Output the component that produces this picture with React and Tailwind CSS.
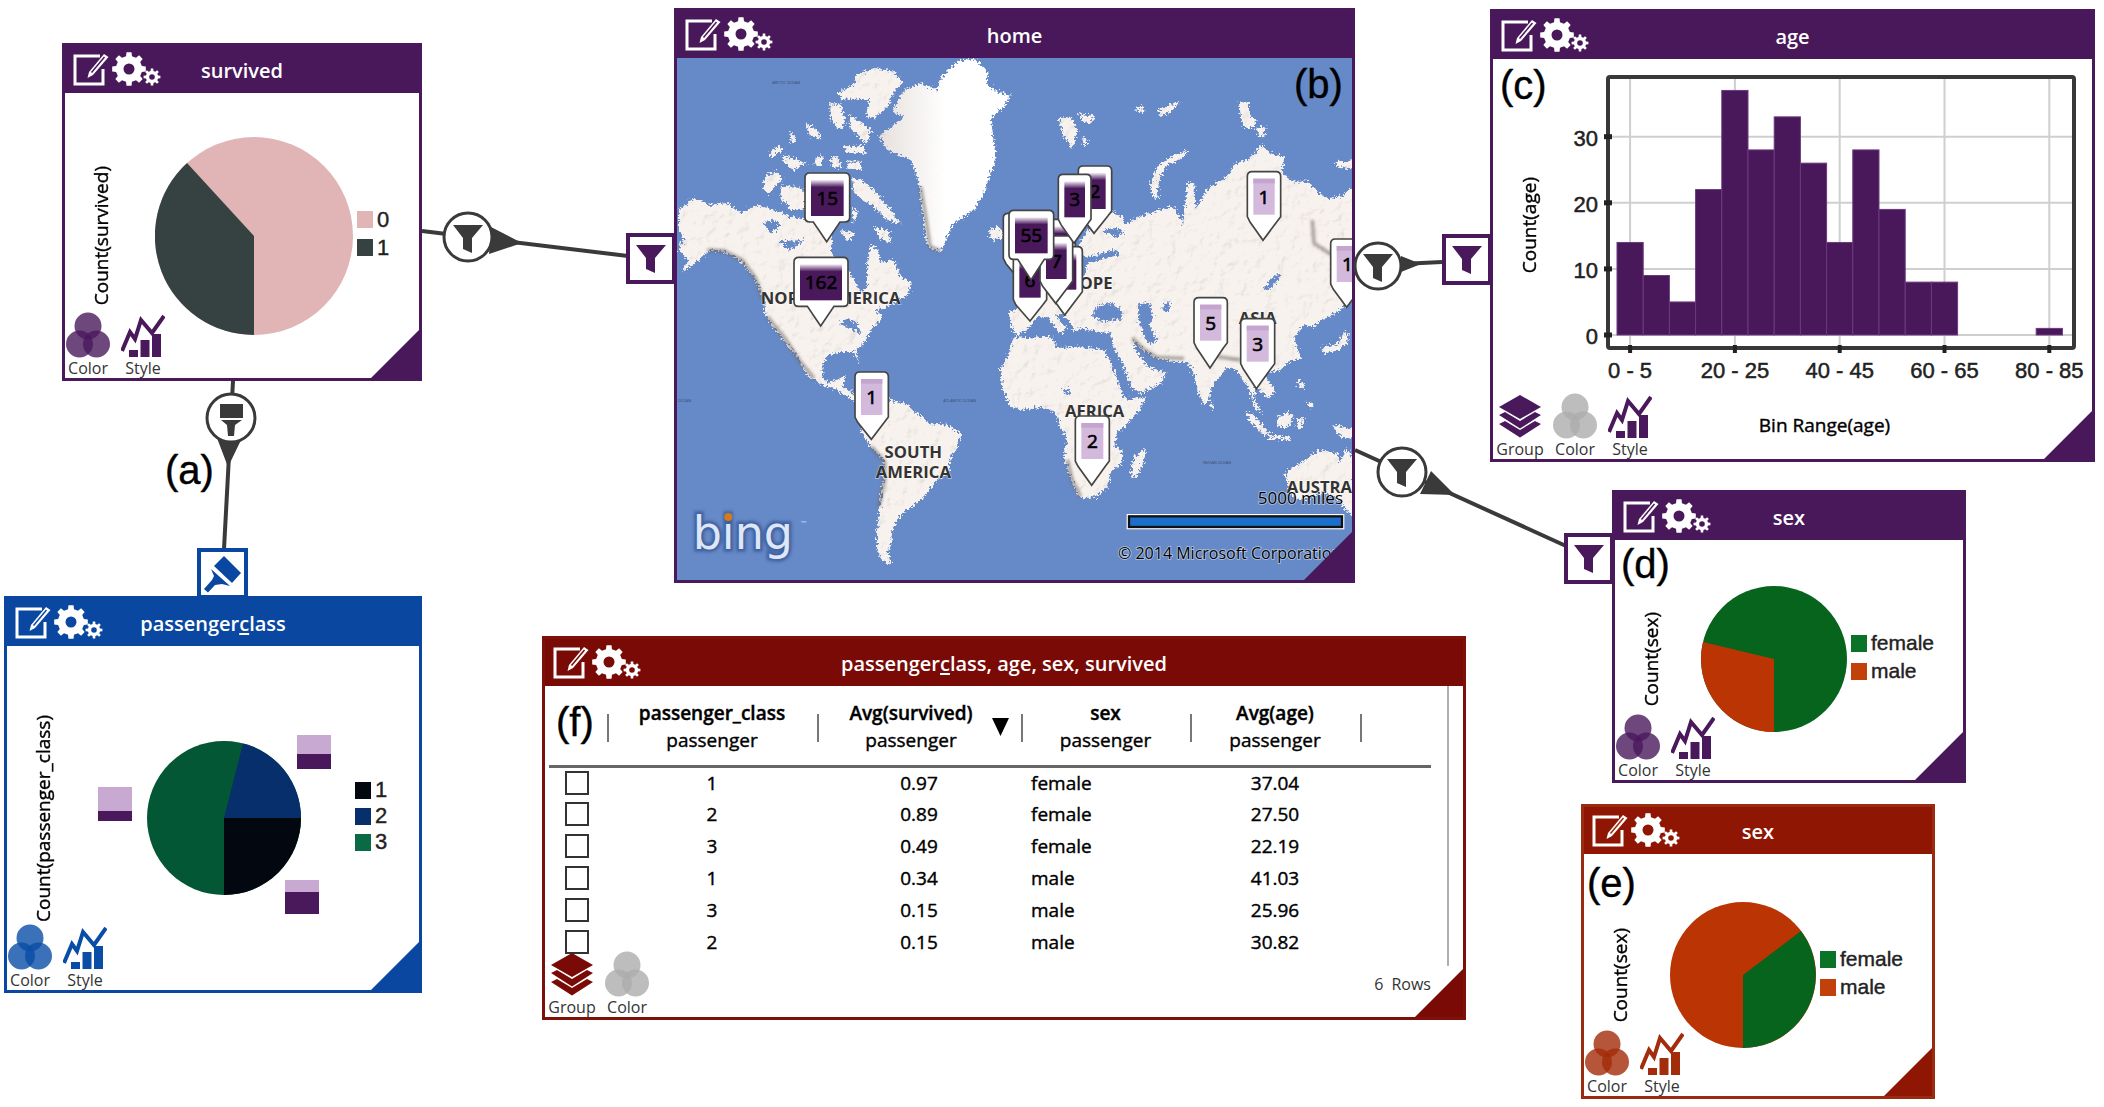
import React from "react";

const THEMES = {
  purple: { border: "border-[#4a195c]", bg: "bg-[#48185a]", text: "text-[#4a195c]" },
  blue: { border: "border-[#0a47a0]", bg: "bg-[#0a47a0]", text: "text-[#0a4da6]" },
  red: { border: "border-[#7e100a]", bg: "bg-[#7a0a06]", text: "text-[#7a0a06]" },
  rust: { border: "border-[#9a2a10]", bg: "bg-[#901604]", text: "text-[#a32c0a]" },
};

function gearPath(cx, cy, outer, root, hole) {
  const teeth = 8;
  const step = (Math.PI * 2) / teeth;
  const at = (r, a) => `${(cx + r * Math.sin(a)).toFixed(2)} ${(cy - r * Math.cos(a)).toFixed(2)}`;
  let d = "";
  for (let i = 0; i < teeth; i++) {
    const a = i * step;
    d += `${i ? "L" : "M"}${at(root, a - step * 0.29)}L${at(outer, a - step * 0.19)}L${at(outer, a + step * 0.19)}L${at(root, a + step * 0.29)}`;
  }
  return `${d}ZM${cx - hole} ${cy}a${hole} ${hole} 0 1 0 ${hole * 2} 0a${hole} ${hole} 0 1 0 ${-hole * 2} 0Z`;
}

const EditIcon = () => (
  <svg width="37" height="35" viewBox="0 0 37 35" fill="none" aria-hidden="true">
    <path d="M27 4H2V32H30V17" stroke="white" strokeWidth="3" />
    <path d="M16 20L31 2L35.500 5L20 23L14.500 26Z" fill="white" />
    <path d="M18.500 20.500L31.500 5" stroke="currentColor" strokeWidth="1.500" />
  </svg>
);

const GearsIcon = () => (
  <svg width="50" height="36" viewBox="0 0 50 36" fill="white" fillRule="evenodd" aria-hidden="true">
    <path d={gearPath(18, 17, 17, 13.2, 5.5)} />
    <path d={gearPath(41, 25, 8.5, 6.2, 2.8)} />
  </svg>
);

const ColorIcon = () => (
  <svg width="44" height="46" viewBox="0 0 44 46" fill="currentColor" fillOpacity="0.8" aria-hidden="true">
    <circle cx="22" cy="14" r="13.500" />
    <circle cx="13.500" cy="32" r="13.500" />
    <circle cx="30.500" cy="32" r="13.500" />
  </svg>
);

const StyleIcon = () => (
  <svg width="44" height="46" viewBox="0 -3 44 46" aria-hidden="true">
    <path d="M1 36L9 17L14 24L20 5L31 18L43 1" fill="none" stroke="currentColor" strokeWidth="4" />
    <path d="M8 35h9v7H8zM19.500 25h9v17h-9zM31 19h9v23h-9z" fill="currentColor" />
  </svg>
);

const GroupIcon = () => (
  <svg width="42" height="46" viewBox="0 -2 42 46" fill="currentColor" aria-hidden="true">
    <path d="M21 0L42 12L21 24L0 12Z" />
    <path d="M0 20L6 17L21 26L36 17L42 20L21 33.500Z" />
    <path d="M0 29L6 26L21 35L36 26L42 29L21 42.500Z" />
  </svg>
);

const FUNNEL = "M0 0H30L19 13V28L10 24V13Z";

const TOOL_ICONS = { Group: GroupIcon, Color: ColorIcon, Style: StyleIcon };

function Tools({ items, theme, muted, inset }) {
  return (
    <div className={`absolute bottom-0 left-0 flex gap-[9px] ${inset ? "pl-1" : ""}`}>
      {items.map((name) => {
        const Icon = TOOL_ICONS[name];
        return (
          <button key={name} type="button" className="flex w-[46px] flex-col items-center">
            <span className={name === muted ? "text-[#adadad]" : THEMES[theme].text}>
              <Icon />
            </span>
            <span className="text-base leading-5 text-[#333]">{name}</span>
          </button>
        );
      })}
    </div>
  );
}

function Window({ title, theme, place, children, tools, muted, inset }) {
  const t = THEMES[theme];
  return (
    <section className={`absolute border-[3px] bg-white ${t.border} ${place}`}>
      <header className={`grid h-[47px] grid-cols-[1fr_auto_1fr] items-center ${t.bg}`}>
        <div className={`flex items-center gap-px pl-2 ${t.text}`}>
          <button type="button" aria-label="Edit">
            <EditIcon />
          </button>
          <button type="button" aria-label="Settings">
            <GearsIcon />
          </button>
        </div>
        <h2 className="pt-0.5 text-[20px] leading-7 font-semibold text-white">{title}</h2>
        <span />
      </header>
      {children}
      {tools && <Tools items={tools} theme={theme} muted={muted} inset={inset} />}
      <div className={`absolute right-0 bottom-0 size-12 [clip-path:polygon(100%_0,100%_100%,0_100%)] ${t.bg}`} />
    </section>
  );
}

const AxisLabel = ({ children }) => (
  <span className="w-6 rotate-180 text-center text-[19px] leading-6 whitespace-nowrap text-black [-webkit-text-stroke:0.4px] [writing-mode:vertical-rl]">
    {children}
  </span>
);

function Legend({ items, size }) {
  return (
    <ul className={`pb-1 font-[Liberation_Sans,Arial,sans-serif] text-[#222] [-webkit-text-stroke:0.4px] ${size}`}>
      {items.map(([label, swatch]) => (
        <li key={label} className="flex items-center gap-1">
          <span className={`h-[17px] w-4 ${swatch}`} />
          {label}
        </li>
      ))}
    </ul>
  );
}

const UnderC = () => (
  <>
    passenger<span className="underline decoration-2 underline-offset-2">c</span>lass
  </>
);

const LAND = [
  "M15 480L60 445L110 465L160 460L200 490L250 465L300 480L345 500L400 510L440 520L475 560L470 610L510 650L540 690L560 725L580 715L580 640L590 585L612 600L620 640L660 630L680 680L715 700L700 735L640 770L600 780L625 800L590 840L570 880L545 900L556 938L540 905L500 905L460 915L445 945L445 980L460 1000L490 990L515 975L505 1010L530 1025L550 1045L560 1065L520 1038L480 1015L450 1008L400 975L370 920L330 870L290 820L275 790L270 745L240 680L200 630L150 605L110 600L70 630L20 670L45 630L15 600L30 560L15 540Z",
  "M550 75L600 55L660 65L685 100L660 125L640 170L600 205L575 200L590 150L540 145L505 150L490 130L540 105Z",
  "M470 160L500 165L515 220L495 240L470 205Z",
  "M525 195L550 210L590 240L580 280L560 265L530 235Z",
  "M510 290L570 285L575 310L520 308ZM395 220L430 240L440 268L405 255ZM350 245L368 270L350 282Z",
  "M285 310L315 285L325 300L290 322ZM325 315L395 340L360 360L335 342ZM425 325L445 318L440 348L422 342Z",
  "M470 325L492 320L502 355L475 350ZM520 335L560 335L562 362L520 354Z",
  "M275 375L310 365L325 385L300 410L285 435L268 415Z",
  "M320 410L370 410L395 430L390 480L350 480L320 440Z",
  "M535 385L560 390L600 420L640 470L680 520L640 510L600 470L540 430Z",
  "M535 470L552 490L538 518ZM600 530L640 540L655 580L620 565ZM500 540L545 550L520 572Z",
  "M945 540L975 530L992 560L955 572Z",
  "M1155 205L1190 200L1210 240L1195 295L1170 260ZM1215 190L1265 200L1250 220L1225 215ZM1225 260L1245 275L1230 285Z",
  "M1383 180L1402 165L1412 187ZM1450 182L1490 165L1520 155L1490 185L1460 197Z",
  "M1695 155L1725 155L1725 190L1745 215L1735 235L1710 230L1700 190ZM1745 235L1775 230L1770 260L1750 255Z",
  "M1435 440L1430 400L1450 350L1490 320L1540 300L1530 320L1480 345L1460 375L1450 420L1455 445Z",
  "M1985 332L2040 335L2040 355L1990 350Z",
  "M1190 620L1230 560L1270 500L1300 480L1345 500L1350 525L1400 500L1460 480L1500 470L1528 525L1540 400L1560 400L1565 480L1600 420L1625 400L1660 380L1680 345L1730 325L1760 285L1790 310L1830 320L1825 370L1860 395L1900 395L1935 430L1960 445L2000 440L2040 410V745L1990 785L1940 812L1920 830L1890 825L1860 860L1880 925L1865 930L1850 930L1820 960L1790 965L1770 975L1803 1020L1785 1045L1760 1025L1745 1000L1740 1050L1765 1090L1745 1075L1725 1020L1700 980L1690 960L1660 950L1640 975L1610 1010L1605 1050L1590 1065L1570 1020L1560 970L1540 935L1500 935L1450 925L1410 900L1375 865L1385 900L1420 950L1475 970L1460 1000L1400 1030L1375 1015L1350 950L1320 890L1310 850L1275 845L1225 835L1200 845L1190 815L1160 790L1145 800L1180 835L1160 850L1120 800L1090 800L1060 840L1025 855L1012 830L1005 790L1040 770L1030 740L1080 700L1150 680L1180 650Z",
  "M1020 860L1050 865L1130 860L1150 895L1215 890L1240 895L1290 900L1310 940L1330 990L1345 1035L1360 1050L1415 1040L1400 1075L1370 1110L1330 1150L1320 1190L1345 1200L1342 1240L1310 1265L1300 1310L1265 1340L1225 1345L1210 1335L1190 1280L1170 1220L1180 1170L1160 1130L1150 1100L1145 1085L1100 1070L1040 1080L1010 1070L985 1020L980 960L1000 925Z",
  "M1380 1220L1415 1195L1410 1230L1390 1282L1370 1275Z",
  "M1612 1055L1624 1070L1612 1078Z",
  "M1715 1085L1740 1095L1785 1152L1770 1158L1730 1115ZM1785 1153L1850 1162L1850 1172L1785 1164Z",
  "M1810 1105L1840 1085L1858 1100L1845 1130L1815 1130ZM1870 1105L1890 1105L1880 1140L1868 1130Z",
  "M1872 990L1888 1000L1890 1020L1875 1010ZM1895 1055L1918 1060L1912 1078Z",
  "M1975 1125L2040 1140V1168L2000 1160Z",
  "M1945 893L1990 883L2010 845L2024 850L2018 880L1990 902L1950 908Z",
  "M1835 1270L1860 1250L1900 1225L1935 1200L1990 1210L2000 1240L2018 1195L2040 1230V1400L2010 1375L1990 1340L1940 1330L1880 1350L1845 1330Z",
  "M545 1050L600 1040L650 1050L700 1065L720 1085L750 1105L760 1120L820 1125L860 1150L850 1190L830 1220L825 1265L790 1290L750 1340L720 1365L690 1385L670 1410L655 1440L650 1480L640 1510L655 1545L625 1530L610 1500L610 1440L620 1350L630 1270L630 1230L590 1190L560 1140L570 1090Z",
];
const GREENLAND =
  "M690 120L740 100L790 120L800 85L850 35L900 25L945 70L935 100L970 125L1010 135L990 170L950 205L960 280L965 330L945 380L930 430L900 480L840 520L820 560L800 605L770 595L755 570L745 480L735 400L710 330L640 300L615 255L655 230L690 200L655 185Z";
const RIDGES =
  "M100 600L150 603L205 630L245 685L268 750M280 800L335 868L375 930L420 985M592 1190L632 1235L632 1290L615 1370M1375 865L1410 898L1450 922L1530 925M1630 920L1700 930M1180 1230L1195 1290L1220 1340M1915 510L1920 580L1970 612L2034 615M740 410L755 500L768 590L800 603";
const WATER = [
  "M270 520L300 512L318 525L295 548ZM320 575L385 572L345 600Z",
  "M1255 800L1270 768L1310 760L1345 785L1340 808L1290 812Z",
  "M1392 765L1425 760L1435 800L1425 830L1448 870L1425 882L1400 830Z",
  "M1215 610L1235 625L1320 600L1335 612L1240 640L1225 690L1205 680ZM1290 540L1330 535L1350 550L1320 560Z",
  "M1770 718L1790 690L1812 672L1815 690L1785 715ZM1165 1018L1190 1020L1180 1035Z",
  "M1470 765L1490 760L1485 785L1470 780ZM500 820L525 805L545 820L560 850L535 835Z",
];

const PINS = [
  { x: 988, y: 490, w: 100, tip: [1045, 700], dark: true },
  { x: 1018, y: 614, w: 100, tip: [1068, 813], text: "6", dark: true },
  { x: 1108, y: 508, w: 96, tip: [1160, 720], dark: true },
  { x: 1125, y: 590, w: 100, tip: [1172, 795], dark: true },
  { x: 1098, y: 558, w: 98, tip: [1145, 760], text: "7", dark: true },
  { x: 1213, y: 348, w: 100, tip: [1260, 550], text: "2", dark: true },
  { x: 1153, y: 373, w: 98, tip: [1200, 580], text: "3", dark: true },
  { x: 1005, y: 481, w: 134, tip: [1071, 690], text: "55", dark: true, wide: true },
  { x: 393, y: 369, w: 134, tip: [458, 575], text: "15", dark: true, wide: true },
  { x: 360, y: 622, w: 162, tip: [440, 828], text: "162", dark: true, wide: true },
  { x: 543, y: 966, w: 100, tip: [592, 1168], text: "1" },
  { x: 1720, y: 365, w: 100, tip: [1767, 571], text: "1" },
  { x: 1560, y: 743, w: 100, tip: [1608, 954], text: "5" },
  { x: 1700, y: 806, w: 102, tip: [1747, 1016], text: "3" },
  { x: 1204, y: 1098, w: 102, tip: [1253, 1306], text: "2" },
  { x: 1970, y: 567, w: 100, tip: [2018, 772], text: "1" },
];

function Pin({ x, y, w, tip, text, dark, wide }) {
  const r = x + w;
  const b = y + 147;
  const d = wide
    ? `M${x + 14} ${y}H${r - 14}Q${r} ${y} ${r} ${y + 14}V${b - 14}Q${r} ${b} ${r - 14} ${b}H${tip[0] + 40}L${tip[0]} ${tip[1]}L${tip[0] - 40} ${b}H${x + 14}Q${x} ${b} ${x} ${b - 14}V${y + 14}Q${x} ${y} ${x + 14} ${y}Z`
    : `M${x + 14} ${y}H${r - 14}Q${r} ${y} ${r} ${y + 14}V${b - 12}L${r - 12} ${b + 4}L${tip[0]} ${tip[1]}L${x + 8} ${b + 4}L${x} ${b - 12}V${y + 14}Q${x} ${y} ${x + 14} ${y}Z`;
  return (
    <g>
      <path d={d} fill="white" stroke="#444" strokeWidth="5" />
      <rect x={x + 18} y={y + 21} width={w - 36} height="108" fill={dark ? "url(#pinDark)" : "#d3b9dc"} />
      {!dark && <rect x={x + 18} y={y + 21} width={w - 36} height="14" fill="#c5a5cf" />}
      {text && (
        <text x={x + w / 2} y={y + 96} textAnchor="middle" fontSize="57" fill="black" stroke="black" strokeWidth="2">
          {text}
        </text>
      )}
    </g>
  );
}

const WorldMap = () => (
  <svg viewBox="9 24 2025 1566" className="block h-auto w-full" fontFamily="'Open Sans', sans-serif" role="img" aria-label="World map of home">
    <defs>
      <linearGradient id="pinDark" x1="0" y1="0" x2="0" y2="1">
        <stop offset="0" stopColor="#f3eaf6" />
        <stop offset="0.2" stopColor="#4a195c" />
        <stop offset="1" stopColor="#4a195c" />
      </linearGradient>
      <linearGradient id="ice" x1="0" y1="0" x2="1" y2="0">
        <stop offset="0" stopColor="#e6e0dc" />
        <stop offset="0.5" stopColor="#ffffff" />
        <stop offset="1" stopColor="#ffffff" />
      </linearGradient>
      <filter id="coast" x="-5%" y="-5%" width="110%" height="110%">
        <feTurbulence type="fractalNoise" baseFrequency="0.14" numOctaves="3" seed="4" result="n" />
        <feDisplacementMap in="SourceGraphic" in2="n" scale="26" xChannelSelector="R" yChannelSelector="G" result="land" />
        <feTurbulence type="fractalNoise" baseFrequency="0.028" numOctaves="3" seed="9" result="hills" />
        <feDiffuseLighting in="hills" surfaceScale="4" diffuseConstant="1.140" lightingColor="#ffffff" result="lit">
          <feDistantLight azimuth="225" elevation="64" />
        </feDiffuseLighting>
        <feComposite in="lit" in2="land" operator="in" result="shade" />
        <feBlend in="shade" in2="land" mode="multiply" />
      </filter>
      <filter id="ragged" x="-5%" y="-5%" width="110%" height="110%">
        <feTurbulence type="fractalNoise" baseFrequency="0.14" numOctaves="3" seed="7" result="n" />
        <feDisplacementMap in="SourceGraphic" in2="n" scale="26" xChannelSelector="R" yChannelSelector="G" />
      </filter>
      <filter id="soft" x="-10%" y="-10%" width="120%" height="120%">
        <feGaussianBlur stdDeviation="4" />
      </filter>
    </defs>
    <rect x="0" y="0" width="2050" height="1600" fill="#6689c7" />
    <g filter="url(#coast)">
      <path d={LAND.join("")} fill="#f8f2ee" />
    </g>
    <g filter="url(#ragged)">
      <path d={GREENLAND} fill="url(#ice)" />
    </g>
    <path d={RIDGES} fill="none" stroke="#6b625c" strokeOpacity="0.6" strokeWidth="10" filter="url(#soft)" />
    <path d={WATER.join("")} fill="#6689c7" stroke="#6689c7" strokeWidth="3" filter="url(#ragged)" />

    <g fill="#3a4a6c" fontSize="12">
      <text x="295" y="103">ARCTIC OCEAN</text>
      <text x="808" y="1055">ATLANTIC OCEAN</text>
      <text x="1587" y="1243">INDIAN OCEAN</text>
      <text x="52" y="1055" textAnchor="end">PACIFIC OCEAN</text>
    </g>
    <g fill="#333" fontSize="50" fontWeight="700" stroke="white" strokeOpacity="0.5" strokeWidth="4" paintOrder="stroke">
      <text x="470" y="763" textAnchor="middle">NORTH AMERICA</text>
      <text x="1316" y="716" textAnchor="end">EUROPE</text>
      <text x="1751" y="822" textAnchor="middle">ASIA</text>
      <text x="1262" y="1102" textAnchor="middle">AFRICA</text>
      <text x="718" y="1224" textAnchor="middle">SOUTH</text>
      <text x="718" y="1283" textAnchor="middle">AMERICA</text>
      <text x="1838" y="1330">AUSTRALIA</text>
    </g>
    {PINS.map((p, i) => (
      <Pin key={i} {...p} />
    ))}

    <g fontFamily="'DejaVu Sans', sans-serif" fontSize="138">
      <text x="56" y="1498" fill="none" stroke="#2e4f8f" strokeOpacity="0.7" strokeWidth="16" filter="url(#soft)" aria-hidden="true">
        bing
      </text>
      <text x="56" y="1498" fill="#dde7f8">bing</text>
      <circle cx="163" cy="1401" r="12" fill="#d27a1c" />
      <text x="378" y="1432" fontSize="24" fill="#c3d3ef">™</text>
    </g>
    <g fill="black" stroke="white" strokeOpacity="0.5" strokeWidth="5" paintOrder="stroke">
      <text x="2007" y="1362" textAnchor="end" fontSize="51">5000 miles</text>
      <text x="1332" y="1526" fontSize="48">© 2014 Microsoft Corporation</text>
    </g>
    <rect x="1363" y="1397" width="643" height="36" fill="#1b6fcb" stroke="white" strokeWidth="10" />
    <rect x="1365" y="1399" width="639" height="32" fill="#1b6fcb" stroke="#111" strokeWidth="7" />
  </svg>
);

const AGE_BINS = [14, 9, 5, 22, 37, 28, 33, 26, 14, 28, 19, 8, 8, 0, 0, 0, 1];
const AGE_TICKS = ["0 - 5", "20 - 25", "40 - 45", "60 - 65", "80 - 85"];

function AgeChart() {
  const base = 335;
  const unit = 6.61;
  const pitch = 26.2;
  const left = 1617;
  return (
    <svg viewBox="1569 59 522 332" className="block h-auto w-[522px]" fontFamily="'Liberation Sans', Arial, sans-serif" fontSize="22" fill="#222" role="img" aria-label="Histogram of age">
      {[0, 10, 20, 30].map((v) => (
        <g key={v}>
          <path d={`M1608 ${base - v * unit}H2074`} stroke="#cfcfcf" strokeWidth="2" />
          <text x="1598" y={base - v * unit + 9} textAnchor="end" stroke="#222" strokeWidth="0.500">{v}</text>
        </g>
      ))}
      {AGE_TICKS.map((label, i) => {
        const x = left + pitch * (i * 4 + 0.5);
        return (
          <g key={label}>
            <path d={`M${x} 76V349`} stroke="#cfcfcf" strokeWidth="2" />
            <text x={x} y="378" textAnchor="middle" stroke="#222" strokeWidth="0.500">{label}</text>
          </g>
        );
      })}
      <rect x="1608" y="77" width="466" height="271" rx="2" fill="none" stroke="#383838" strokeWidth="4" />
      {AGE_BINS.map((v, i) =>
        v ? (
          <rect key={i} x={left + i * pitch} y={base - v * unit} width={pitch} height={v * unit} fill="#48185a" stroke="#6c3a7c" strokeWidth="1" />
        ) : null
      )}
      {[0, 10, 20, 30].map((v) => (
        <path key={v} d={`M1604 ${base - v * unit}H1612`} stroke="#222" strokeWidth="5" />
      ))}
      {AGE_TICKS.map((label, i) => (
        <path key={label} d={`M${left + pitch * (i * 4 + 0.5)} 345V353`} stroke="#222" strokeWidth="4" />
      ))}
    </svg>
  );
}

const ROWS = [
  ["1", "0.97", "female", "37.04"],
  ["2", "0.89", "female", "27.50"],
  ["3", "0.49", "female", "22.19"],
  ["1", "0.34", "male", "41.03"],
  ["3", "0.15", "male", "25.96"],
  ["2", "0.15", "male", "30.82"],
];
const COLUMNS = ["passenger_class", "Avg(survived)", "sex", "Avg(age)"];

function ResultTable() {
  return (
    <div className="pl-1">
      <div className="mr-3.5 h-[280px] border-r-2 border-[#b0b0b0] pr-4">
        <table className="w-full table-fixed border-collapse text-[19px] text-black [-webkit-text-stroke:0.4px]">
          <colgroup>
            <col className="w-[58px]" />
            <col className="w-[210px]" />
            <col className="w-[204px]" />
            <col className="w-[169px]" />
            <col className="w-[170px]" />
            <col />
          </colgroup>
          <thead>
            <tr className="h-20 border-b-[3px] border-[#666]">
              <th aria-label="Select" />
              {COLUMNS.map((name) => (
                <th key={name} className="p-0 pt-1 align-middle font-normal">
                  <div className="relative leading-[27px]">
                    <span className="absolute top-3.5 left-0 h-7 w-0.5 bg-[#777]" />
                    {name === "Avg(survived)" && (
                      <svg className="absolute top-[18px] right-3" width="17" height="18" aria-hidden="true">
                        <path d="M0 0H17L8.500 18Z" />
                      </svg>
                    )}
                    <div className={name === "Avg(survived)" ? "pr-4" : ""}>
                      <div className="font-semibold">{name}</div>
                      <div>passenger</div>
                    </div>
                  </div>
                </th>
              ))}
              <th className="p-0 pt-1" aria-label="End">
                <div className="relative h-[54px]">
                  <span className="absolute top-3.5 left-0 h-7 w-0.5 bg-[#777]" />
                </div>
              </th>
            </tr>
          </thead>
          <tbody>
            {ROWS.map((row, i) => (
              <tr key={i} className="h-8">
                <td className="p-0 pl-4">
                  <input type="checkbox" aria-label={`Row ${i + 1}`} className="block size-6 appearance-none border-2 border-[#333] bg-white" />
                </td>
                <td className="p-0 text-center">{row[0]}</td>
                <td className="p-0 text-center">{row[1]}</td>
                <td className="p-0 pl-2.5">{row[2]}</td>
                <td className="p-0 text-center">{row[3]}</td>
                <td />
              </tr>
            ))}
          </tbody>
        </table>
      </div>
      <p className="flex h-[51px] justify-end gap-2 pt-1.5 pr-8 text-base text-[#333]">
        <span>6</span>
        <span>Rows</span>
      </p>
    </div>
  );
}

const SexLegend = () => (
  <Legend
    size="text-[21px] leading-7"
    items={[
      ["female", "bg-[#0a7327]"],
      ["male", "bg-[#c2400a]"],
    ]}
  />
);

const FunnelPort = ({ place }) => (
  <button type="button" aria-label="Filter input" className={`absolute flex h-[51px] w-[50px] items-center justify-center border-4 border-[#4a195c] bg-white ${place}`}>
    <svg width="30" height="28" viewBox="0 0 30 28" fill="#4a195c" aria-hidden="true">
      <path d={FUNNEL} />
    </svg>
  </button>
);

const Note = ({ place, children }) => (
  <span className={`absolute font-[Liberation_Sans,Arial,sans-serif] text-[40px] leading-10 text-black [-webkit-text-stroke:0.4px] ${place}`}>{children}</span>
);

export default function App() {
  return (
    <main className="relative min-h-screen w-full overflow-hidden bg-white font-[Open_Sans,Noto_Sans,sans-serif]">
      <Window title="survived" theme="purple" place="top-[43px] left-[62px] w-[360px]" tools={["Color", "Style"]}>
        <div className="flex h-[285px] items-center pl-6">
          <AxisLabel>Count(survived)</AxisLabel>
          <svg className="mr-1 ml-[42px]" width="198" height="198" viewBox="-99 -99 198 198" role="img" aria-label="Pie of survived">
            <circle r="99" fill="#e1b5b5" />
            <path d="M0 0V99A99 99 0 0 1 -67 -73Z" fill="#364242" />
          </svg>
          <Legend size="text-[22px] leading-7" items={[["0", "bg-[#e1b5b5]"], ["1", "bg-[#364242]"]]} />
        </div>
      </Window>

      <Window title={<UnderC />} theme="blue" place="top-[596px] left-1 w-[418px]" tools={["Color", "Style"]}>
        <div className="flex h-[344px] items-center pl-6">
          <AxisLabel>Count(passenger_class)</AxisLabel>
          <svg className="mr-6 ml-[42px]" width="234" height="196" viewBox="97 720 234 196" role="img" aria-label="Pie of passenger class">
            <circle cx="224" cy="818" r="77" fill="#035735" />
            <path d="M224 818V895A77 77 0 0 0 301 818Z" fill="#030810" />
            <path d="M224 818H301A77 77 0 0 0 243 743.500Z" fill="#072f6b" />
            <g fill="#c7a9d1">
              <rect x="98" y="787" width="34" height="34" />
              <rect x="297" y="735" width="34" height="34" />
              <rect x="285" y="880" width="34" height="34" />
            </g>
            <g fill="#4a195c">
              <rect x="98" y="811" width="34" height="10" />
              <rect x="297" y="754" width="34" height="15" />
              <rect x="285" y="892" width="34" height="22" />
            </g>
          </svg>
          <Legend size="text-[22px] leading-[26px]" items={[["1", "bg-[#030810]"], ["2", "bg-[#072f6b]"], ["3", "bg-[#0a6a45]"]]} />
        </div>
      </Window>

      <Window title="home" theme="purple" place="top-2 left-[674px] w-[681px]">
        <WorldMap />
      </Window>

      <Window title="age" theme="purple" place="top-[9px] left-[1490px] w-[605px]" tools={["Group", "Color", "Style"]} muted="Color" inset>
        <div className="h-[400px]">
          <div className="flex items-center pl-6">
            <AxisLabel>Count(age)</AxisLabel>
            <div className="ml-7">
              <AgeChart />
            </div>
          </div>
          <p className="mt-5 pl-16 text-center text-[19px] leading-7 text-black [-webkit-text-stroke:0.4px]">Bin Range(age)</p>
        </div>
      </Window>

      <Window title="sex" theme="purple" place="top-[490px] left-[1612px] w-[354px]" tools={["Color", "Style"]}>
        <div className="flex h-[240px] items-center pb-0.5 pl-6">
          <AxisLabel>Count(sex)</AxisLabel>
          <svg className="mr-1 ml-[38px]" width="146" height="146" viewBox="-73 -73 146 146" role="img" aria-label="Pie of sex, filtered">
            <circle r="73" fill="#06641c" />
            <path d="M0 0V73A73 73 0 0 1 -71 -17Z" fill="#bb3404" />
          </svg>
          <SexLegend />
        </div>
      </Window>

      <Window title="sex" theme="rust" place="top-[804px] left-[1581px] w-[354px]" tools={["Color", "Style"]}>
        <div className="flex h-[242px] items-center pl-6">
          <AxisLabel>Count(sex)</AxisLabel>
          <svg className="mr-1 ml-[38px]" width="146" height="146" viewBox="-73 -73 146 146" role="img" aria-label="Pie of sex">
            <circle r="73" fill="#bb3404" />
            <path d="M0 0V73A73 73 0 0 0 58 -44Z" fill="#06641c" />
          </svg>
          <SexLegend />
        </div>
      </Window>

      <Window
        title={
          <>
            <UnderC />, age, sex, survived
          </>
        }
        theme="red"
        place="top-[636px] left-[542px] w-[924px]"
        tools={["Group", "Color"]}
        muted="Color"
        inset
      >
        <ResultTable />
      </Window>

      <svg className="pointer-events-none absolute top-0 left-0" width="2104" height="1107" viewBox="0 0 2104 1107" fill="#3a3a3a" aria-hidden="true">
        <path d="M422 231L628 256M233 381L224 549M1401 264L1442 262M1355 450L1566 546" stroke="#3a3a3a" strokeWidth="4" />
        <path d="M491 227L522 243L489 254ZM217 438H242L228 467ZM1401 256L1421 264L1401 272ZM1431 471L1455 495L1420 494Z" />
        <g fill="white" stroke="#3a3a3a" strokeWidth="3">
          <circle cx="468" cy="237" r="24" />
          <circle cx="231" cy="418" r="24" />
          <circle cx="1378" cy="266" r="23" />
          <circle cx="1402" cy="472" r="24" />
        </g>
        <path d={FUNNEL} transform="translate(453 225)" />
        <path d={FUNNEL} transform="translate(1363 254)" />
        <path d={FUNNEL} transform="translate(1387 459)" />
        <path d="M220 404H243V418H220ZM221 420H242L235 425L234 436H228L227 425Z" />
      </svg>

      <FunnelPort place="top-[233px] left-[626px]" />
      <FunnelPort place="top-[234px] left-[1442px]" />
      <FunnelPort place="top-[533px] left-[1564px]" />
      <button type="button" aria-label="Brush input" className="absolute top-[548px] left-[197px] flex size-[51px] items-center justify-center border-4 border-[#0a47a0] bg-white">
        <svg width="38" height="38" viewBox="206 553 38 38" fill="#0a47a0" aria-hidden="true">
          <path d="M226 554L243 571L234 581L216 564Z" />
          <path d="M213 567L232 584L224 582L217 583L210 590.500L206 587L214 578L216 574Z" />
        </svg>
      </button>

      <Note place="top-[450px] left-[165px]">(a)</Note>
      <Note place="top-[64px] left-[1294px]">(b)</Note>
      <Note place="top-[65px] left-[1500px]">(c)</Note>
      <Note place="top-[544px] left-[1621px]">(d)</Note>
      <Note place="top-[863px] left-[1587px]">(e)</Note>
      <Note place="top-[702px] left-[556px]">(f)</Note>
    </main>
  );
}
